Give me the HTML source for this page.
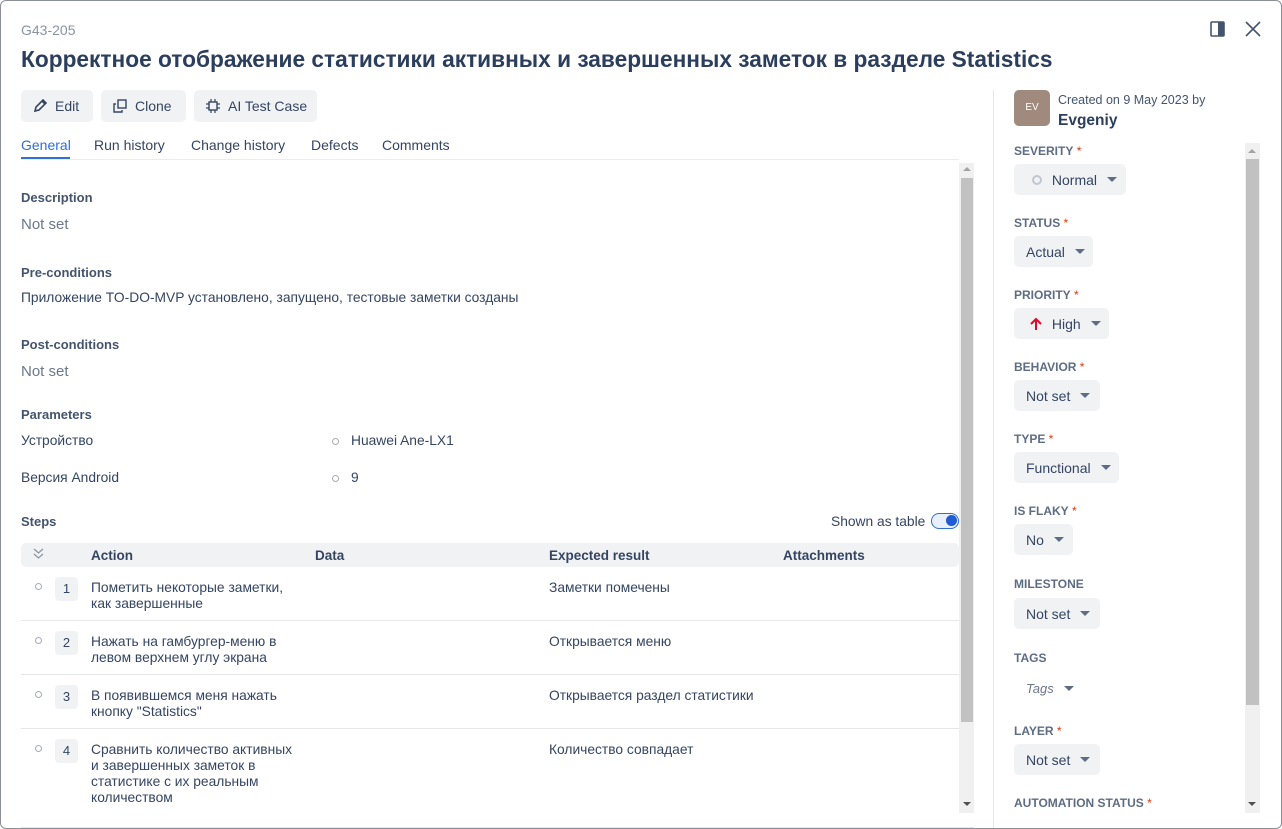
<!DOCTYPE html>
<html><head><meta charset="utf-8"><style>
*{box-sizing:border-box;margin:0;padding:0}
body{width:1282px;height:829px;background:#fff;font-family:"Liberation Sans","Noto Sans CJK SC",sans-serif;color:#344563;position:relative;overflow:hidden}
.frame{position:absolute;left:0;top:0;width:1282px;height:829px;border:1px solid #8a8f99;border-radius:6px;pointer-events:none}
.a{position:absolute;white-space:nowrap}
.btn{position:absolute;top:90px;height:32px;background:#f1f2f4;border-radius:5px;font-size:14px;color:#344563;display:flex;align-items:center;padding:0 12px;gap:8px;white-space:nowrap}
.btn svg,.sel svg{flex-shrink:0}
.tab{position:absolute;top:137px;font-size:14px;color:#344563;white-space:nowrap}
.h{font-size:13px;font-weight:bold;color:#44546f}
.ns{font-size:15px;color:#6b778c}
.t13{font-size:13.8px;color:#344563}
.lbl{position:absolute;left:1014px;font-size:12px;font-weight:bold;color:#5e6c84;white-space:nowrap}
.lbl b{color:#de350b;font-weight:normal}
.sel{position:absolute;left:1014px;height:31px;background:#f1f2f4;border-radius:5px;font-size:14px;color:#344563;display:flex;align-items:center;padding:0 12px;gap:6px;white-space:nowrap}
.car{width:0;height:0;border-left:5px solid transparent;border-right:5px solid transparent;border-top:5px solid #5e6c84;margin-left:4px;flex-shrink:0}
.num{position:absolute;left:55px;width:23px;height:24px;background:#f1f2f4;border-radius:4px;font-size:13px;text-align:center;line-height:24px;color:#344563}
.dot{position:absolute;width:7px;height:7px;border:1px solid #a5adba;border-radius:50%}
.row{position:absolute;left:21px;width:938px;border-top:1px solid #e4e6ea}
</style></head><body>
<div class="a" style="left:21px;top:22px;font-size:14px;color:#8993a4">G43-205</div>
<div class="a" style="left:21px;top:46px;font-size:22.7px;font-weight:bold;color:#2c3e5d">Корректное отображение статистики активных и завершенных заметок в разделе Statistics</div>
<svg class="a" style="left:1210px;top:21px" width="16" height="16"><rect x="1" y="1" width="13" height="14" fill="none" stroke="#44546f" stroke-width="1.6" rx="1"/><rect x="8" y="1" width="6" height="14" fill="#44546f"/></svg>
<svg class="a" style="left:1245px;top:21px" width="16" height="16"><path d="M1 1L15 15M15 1L1 15" stroke="#44546f" stroke-width="1.6"/></svg>

<div class="btn" style="left:21px;width:72px"><svg width="14" height="14"><path d="M2 12l1-4 7-7 3 3-7 7z M9 2l3 3" fill="none" stroke="#344563" stroke-width="1.6"/></svg>Edit</div>
<div class="btn" style="left:101px;width:85px"><svg width="14" height="14"><rect x="5" y="1" width="8" height="8" fill="none" stroke="#344563" stroke-width="1.4"/><path d="M3 5H1v8h8v-2" fill="none" stroke="#344563" stroke-width="1.4"/></svg>Clone</div>
<div class="btn" style="left:194px;width:123px"><svg width="14" height="14"><rect x="3" y="3" width="8" height="8" fill="none" stroke="#344563" stroke-width="1.4"/><path d="M5 0v3M9 0v3M5 11v3M9 11v3M0 5h3M0 9h3M11 5h3M11 9h3" stroke="#344563" stroke-width="1.2"/></svg>AI Test Case</div>

<div class="tab" style="left:21px;color:#2f6fd6">General</div>
<div class="a" style="left:21px;top:157px;width:49px;height:2px;background:#2f6fd6"></div>
<div class="tab" style="left:94px">Run history</div>
<div class="tab" style="left:191px">Change history</div>
<div class="tab" style="left:311px">Defects</div>
<div class="tab" style="left:382px">Comments</div>
<div class="a" style="left:21px;top:159px;width:938px;height:1px;background:#ebecf0"></div>

<div class="a h" style="left:21px;top:190px">Description</div>
<div class="a ns" style="left:21px;top:216px">Not set</div>
<div class="a h" style="left:21px;top:265px">Pre-conditions</div>
<div class="a t13" style="left:21px;top:290px">Приложение TO-DO-MVP установлено, запущено, тестовые заметки созданы</div>
<div class="a h" style="left:21px;top:337px">Post-conditions</div>
<div class="a ns" style="left:21px;top:363px">Not set</div>
<div class="a h" style="left:21px;top:407px">Parameters</div>
<div class="a t13" style="left:21px;top:433px">Устройство</div>
<div class="dot" style="left:332px;top:438px"></div>
<div class="a t13" style="left:351px;top:433px">Huawei Ane-LX1</div>
<div class="a t13" style="left:21px;top:470px">Версия Android</div>
<div class="dot" style="left:332px;top:475px"></div>
<div class="a t13" style="left:351px;top:470px">9</div>

<div class="a h" style="left:21px;top:514px">Steps</div>
<div class="a t13" style="left:831px;top:514px">Shown as table</div>
<div class="a" style="left:931px;top:513px;width:28px;height:16px;border:1.5px solid #2f6fd6;border-radius:8px;background:#e9f0fc"><div style="position:absolute;right:1px;top:1px;width:11px;height:11px;border-radius:50%;background:#1f5bd1"></div></div>

<div class="a" style="left:21px;top:543px;width:938px;height:24px;background:#f1f2f4;border-radius:5px"></div>
<svg class="a" style="left:33px;top:548px" width="11" height="11"><path d="M1 1l4.5 4 4.5-4M1 6l4.5 4 4.5-4" fill="none" stroke="#8993a4" stroke-width="1.2"/></svg>
<div class="a h" style="left:91px;top:548px;color:#344563;font-size:13.5px">Action</div>
<div class="a h" style="left:315px;top:548px;color:#344563;font-size:13.5px">Data</div>
<div class="a h" style="left:549px;top:548px;color:#344563;font-size:13.5px">Expected result</div>
<div class="a h" style="left:783px;top:548px;color:#344563;font-size:13.5px">Attachments</div>

<div class="dot" style="left:35px;top:583px"></div><div class="num" style="top:577px">1</div>
<div class="a t13" style="left:91px;top:580px;line-height:16px">Пометить некоторые заметки,<br>как завершенные</div>
<div class="a t13" style="left:549px;top:580px">Заметки помечены</div>
<div class="row" style="top:620px"></div>
<div class="dot" style="left:35px;top:637px"></div><div class="num" style="top:631px">2</div>
<div class="a t13" style="left:91px;top:634px;line-height:16px">Нажать на гамбургер-меню в<br>левом верхнем углу экрана</div>
<div class="a t13" style="left:549px;top:634px">Открывается меню</div>
<div class="row" style="top:674px"></div>
<div class="dot" style="left:35px;top:691px"></div><div class="num" style="top:685px">3</div>
<div class="a t13" style="left:91px;top:688px;line-height:16px">В появившемся меня нажать<br>кнопку "Statistics"</div>
<div class="a t13" style="left:549px;top:688px">Открывается раздел статистики</div>
<div class="row" style="top:728px"></div>
<div class="dot" style="left:35px;top:745px"></div><div class="num" style="top:739px">4</div>
<div class="a t13" style="left:91px;top:742px;line-height:16px">Сравнить количество активных<br>и завершенных заметок в<br>статистике с их реальным<br>количеством</div>
<div class="a t13" style="left:549px;top:742px">Количество совпадает</div>

<div class="a" style="left:959px;top:163px;width:15px;height:650px;background:#f0f0f0"></div>
<div class="a" style="left:961px;top:178px;width:12px;height:544px;background:#c1c1c1"></div>
<div class="a" style="left:963px;top:167px;border-left:4px solid transparent;border-right:4px solid transparent;border-bottom:4px solid #a3a3a3"></div>
<div class="a" style="left:963px;top:802px;border-left:4px solid transparent;border-right:4px solid transparent;border-top:4px solid #505050"></div>
<div class="a" style="left:21px;top:827px;width:953px;height:1px;background:#e4e6ea"></div>

<div class="a" style="left:993px;top:90px;width:1px;height:739px;background:#e4e6ea"></div>
<div class="a" style="left:1014px;top:90px;width:36px;height:36px;background:#9f8a7d;border-radius:5px;color:#fff;font-size:10px;text-align:center;line-height:36px">EV</div>
<div class="a" style="left:1058px;top:93px;font-size:12.5px;color:#44546f">Created on 9 May 2023 by</div>
<div class="a" style="left:1058px;top:112px;font-size:15.5px;font-weight:bold;color:#2c3e5d">Evgeniy</div>

<div class="lbl" style="top:144px">SEVERITY<b> *</b></div>
<div class="sel" style="top:164px;width:112px;padding-left:18px"><span style="width:10px;height:10px;border:2px solid #c1c7d0;border-radius:50%;flex-shrink:0"></span>&nbsp;Normal<span class="car"></span></div>
<div class="lbl" style="top:216px">STATUS<b> *</b></div>
<div class="sel" style="top:236px;width:79px">Actual<span class="car"></span></div>
<div class="lbl" style="top:288px">PRIORITY<b> *</b></div>
<div class="sel" style="top:308px;width:95px;padding-left:16px"><svg width="12" height="14"><path d="M6 13V2M1 7l5-5 5 5" fill="none" stroke="#de0b24" stroke-width="2"/></svg>&nbsp;High<span class="car"></span></div>
<div class="lbl" style="top:360px">BEHAVIOR<b> *</b></div>
<div class="sel" style="top:380px;width:86px">Not set<span class="car"></span></div>
<div class="lbl" style="top:432px">TYPE<b> *</b></div>
<div class="sel" style="top:452px;width:105px">Functional<span class="car"></span></div>
<div class="lbl" style="top:504px">IS FLAKY<b> *</b></div>
<div class="sel" style="top:524px;width:59px">No<span class="car"></span></div>
<div class="lbl" style="top:577px">MILESTONE</div>
<div class="sel" style="top:598px;width:86px">Not set<span class="car"></span></div>
<div class="lbl" style="top:651px">TAGS</div>
<div class="sel" style="top:673px;width:60px;background:none;font-style:italic;color:#6b778c;font-size:13px">Tags<span class="car"></span></div>
<div class="lbl" style="top:724px">LAYER<b> *</b></div>
<div class="sel" style="top:744px;width:86px">Not set<span class="car"></span></div>
<div class="lbl" style="top:796px">AUTOMATION STATUS<b> *</b></div>

<div class="a" style="left:1245px;top:143px;width:15px;height:670px;background:#f0f0f0"></div>
<div class="a" style="left:1246px;top:159px;width:13px;height:546px;background:#c1c1c1"></div>
<div class="a" style="left:1248px;top:149px;border-left:4px solid transparent;border-right:4px solid transparent;border-bottom:4px solid #a3a3a3"></div>
<div class="a" style="left:1248px;top:802px;border-left:4px solid transparent;border-right:4px solid transparent;border-top:4px solid #505050"></div>
<div class="frame"></div>
</body></html>
